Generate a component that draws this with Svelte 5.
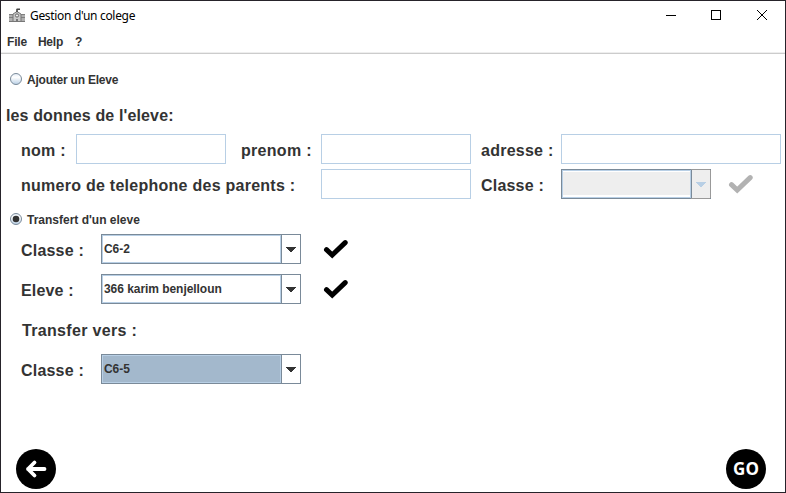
<script>
  const combos = { classe: 'C6-2', eleve: '366 karim benjelloun', cible: 'C6-5' };
</script>

{#snippet check(color)}
  <svg class="check" width="26" height="22" viewBox="0 0 26 22">
    <path d="M3.5 11.7 L9.2 17 L22.2 4.6" fill="none" stroke={color} stroke-width="5" stroke-linecap="round" />
  </svg>
{/snippet}

{#snippet combo(value, kind)}
  <div class="combo {kind}">
    <div class="value"><span>{value}</span></div>
    <div class="drop">
      <svg width="10" height="5" viewBox="0 0 10 5" shape-rendering="crispEdges">
        <path d="M0 0H10V1H9V2H8V3H7V4H6V5H4V4H3V3H2V2H1V1H0Z" fill="currentColor" />
      </svg>
    </div>
  </div>
{/snippet}

<div class="window">
  <header>
    <svg class="logo" width="16" height="16" viewBox="0 0 16 16">
      <path d="M0 6H5V14H0ZM11 6H16V14H11Z" fill="#b0b0b0" />
      <path d="M0 6.5H5M11 6.5H16M0 9.5H5M11 9.5H16" stroke="#808080" />
      <path d="M4 14V6L8 3.5L12 6V14" fill="#c8c8c8" stroke="#777" />
      <path d="M8 4V0.8M8 1.3H11" fill="none" stroke="#444" stroke-width="1.6" />
      <circle cx="8" cy="7.5" r="1.6" fill="#f2f2f2" stroke="#666" />
      <path d="M7 11H9V14H7Z" fill="#777" />
      <path d="M0 13.5H16" stroke="#777" />
    </svg>
    <span class="title">Gestion d'un colege</span>
    <svg class="controls" width="102" height="12" viewBox="0 0 102 12">
      <path d="M0 5.5H10" stroke="#000" shape-rendering="crispEdges" />
      <path d="M45.5 .5H54.5V9.5H45.5Z" fill="none" stroke="#000" shape-rendering="crispEdges" />
      <path d="M91 0L101 10M101 0L91 10" stroke="#000" />
    </svg>
  </header>
  <nav><span class="m1">File</span><span class="m2">Help</span><span>?</span></nav>

  <main>
    <div class="radio r1">
      <svg width="12" height="12" viewBox="0 0 12 12">
        <defs><linearGradient id="g" x2="0" y2="1"><stop stop-color="#e4edf6" /><stop offset=".35" stop-color="#fff" /><stop offset="1" stop-color="#b8cfe5" /></linearGradient></defs>
        <circle cx="6" cy="6" r="5.5" fill="url(#g)" stroke="#7a8a99" />
      </svg>
      <span class="t-ajouter">Ajouter un Eleve</span>
    </div>
    <h2>les donnes de l'eleve:</h2>
    <div class="row a">
      <label class="w55" for="nom"><span class="l-nom">nom :</span></label><input id="nom" class="short" />
      <label class="w80" for="prenom"><span class="l-prenom">prenom :</span></label><input id="prenom" class="short" />
      <label class="w80" for="adresse"><span class="l-adresse">adresse :</span></label><input id="adresse" class="long" />
    </div>
    <div class="row b">
      <label class="w300" for="tel"><span class="l-tel">numero de telephone des parents :</span></label><input id="tel" class="short" />
      <div class="lab w80"><span class="l-classe">Classe :</span></div>{@render combo('', 'disabled')}
      {@render check('#b2b2b2')}
    </div>
    <div class="radio r2">
      <svg width="12" height="12" viewBox="0 0 12 12">
        <circle cx="6" cy="6" r="5.5" fill="url(#g)" stroke="#7a8a99" />
        <circle cx="6" cy="6" r="3.3" fill="#333" />
      </svg>
      <span class="t-transfert">Transfert d'un eleve</span>
    </div>
    <div class="row c">
      <div class="lab w80"><span class="l-classe">Classe :</span></div>{@render combo(combos.classe, '')}
      {@render check('#000')}
    </div>
    <div class="row d">
      <div class="lab w80"><span class="l-eleve">Eleve :</span></div>{@render combo(combos.eleve, '')}
      {@render check('#000')}
    </div>
    <div class="row e"><div class="lab"><span class="l-vers">Transfer vers :</span></div></div>
    <div class="row f">
      <div class="lab w80"><span class="l-classe">Classe :</span></div>{@render combo(combos.cible, 'selected')}
    </div>
  </main>
  <footer>
    <button class="round" aria-label="Retour">
      <svg width="40" height="40" viewBox="0 0 40 40">
        <path d="M28.5 20H12M18.5 13.5L12 20L18.5 26.5" fill="none" stroke="#fff" stroke-width="3.8" stroke-linecap="round" stroke-linejoin="round" />
      </svg>
    </button>
    <button class="round"><span class="go">GO</span></button>
  </footer>
</div>

<style>
  :global(body) { margin: 0; background: #fff; }
  * { box-sizing: border-box; }
  .window {
    width: 786px; height: 493px; border: 1px solid #26232a; background: #fff;
    display: flex; flex-direction: column; overflow: hidden;
    font-family: "Liberation Sans", Arial, sans-serif; font-weight: bold; color: #333;
  }
  span, h2 { white-space: pre; }
  header { height: 30px; display: flex; align-items: center; padding: 0 17px 0 8px; flex: none; }
  .logo { margin-right: 5px; }
  .title { font: 12px/16px "Noto Sans", sans-serif; letter-spacing: -.32px; color: #000; }
  .controls { margin-left: auto; }
  nav { height: 23px; flex: none; display: flex; align-items: center; padding-left: 6px; border-bottom: 1px solid #ccc; box-shadow: inset 0 -1px #eee; font-size: 12px; letter-spacing: -.2px; }
  .m1 { margin-right: 11px; }
  .m2 { margin-right: 12px; }
  main { flex: 1; display: flex; flex-direction: column; }
  .radio { height: 14px; display: flex; align-items: center; gap: 5px; padding-left: 9px; font-size: 12px; flex: none; }
  .radio span { padding-top: 2px; }
  .t-ajouter { letter-spacing: -.22px; }
  .r1 { margin-top: 18px; }
  h2 { margin: 20px 0 0 5px; font-size: 16px; line-height: 20px; height: 20px; letter-spacing: .13px; flex: none; }
  .row { display: flex; align-items: center; height: 30px; padding-left: 20px; font-size: 16px; flex: none; }
  .a { margin-top: 8px; }
  .b { margin-top: 5px; }
  .r2 { margin-top: 13px; }
  .c { margin-top: 8px; }
  .d { margin-top: 10px; }
  .e { margin-top: 10px; padding-left: 21px; }
  .f { margin-top: 10px; }
  label, .lab { flex: none; padding-top: 4px; }
  .l-nom { letter-spacing: .25px; }
  .l-prenom { letter-spacing: .3px; }
  .l-adresse { letter-spacing: .25px; }
  .l-tel { letter-spacing: .26px; }
  .l-classe { letter-spacing: .2px; }
  .l-eleve { letter-spacing: .15px; }
  .l-vers { letter-spacing: .32px; }
  .w55 { width: 55px; }
  .w80 { width: 80px; }
  .w300 { width: 300px; }
  input { height: 30px; border: 1px solid #b8cfe5; border-radius: 0; padding: 2px; margin: 0 10px 0 0; outline: 0; background: #fff; flex: none; }
  .short { width: 150px; }
  .w55 + .short { margin-right: 15px; }
  .long { width: 220px; margin-right: 0; }
  .combo { display: flex; height: 30px; border: 1px solid #7a8a99; flex: none; width: 200px; }
  .value { flex: 1; border: 1px solid #b8cfe5; font-size: 12px; letter-spacing: -.05px; padding: 0 0 0 1px; display: flex; align-items: center; }
  .drop { width: 19px; border-left: 1px solid #7a8a99; display: flex; align-items: center; justify-content: center; color: #333; padding-top: 1px; }
  .selected .value { background: #a3b8cc; }
  .disabled { width: 150px; }
  .disabled .value { background: #eee; box-shadow: inset 0 1px #fff, inset 0 -2px #fff; }
  .disabled .drop { background: #eee; color: #b8cfe5; box-shadow: 1px 0 #999, 0 -1px #999, 0 1px #999; }
  .check { margin-left: 22px; }
  .b .check { margin-left: 17px; }
  footer { height: 43px; flex: none; display: flex; justify-content: space-between; padding: 0 19px 0 15px; }
  .round { width: 40px; height: 40px; border: 0; border-radius: 50%; padding: 0; background: #000; color: #fff; display: flex; align-items: center; justify-content: center; }
  .go { font: bold 17px/20px "Open Sans", sans-serif; }
</style>
